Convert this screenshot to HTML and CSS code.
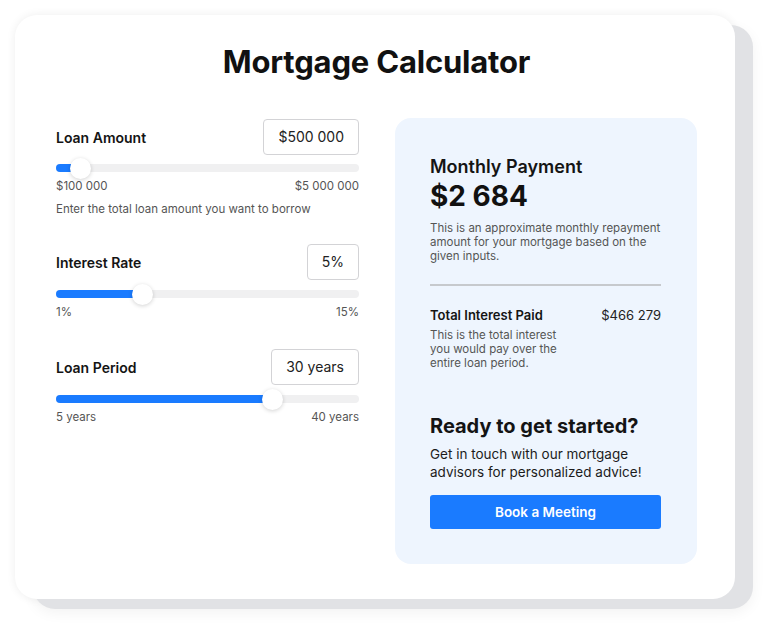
FILE: index.html
```html
<!DOCTYPE html>
<html lang="en">
<head>
<meta charset="utf-8">
<title>Mortgage Calculator</title>
<link rel="stylesheet" href="styles.css">
</head>
<body>
<div class="card">
  <h1 class="title">Mortgage Calculator</h1>
  <div class="columns">
    <div class="inputs">
      <div class="field">
        <div class="field-head">
          <span class="label">Loan Amount</span>
          <span class="value-box">$500 000</span>
        </div>
        <div class="track">
          <div class="fill" style="width:8.2%"></div>
          <div class="thumb" style="left:8.2%"></div>
        </div>
        <div class="range"><span>$100 000</span><span>$5 000 000</span></div>
        <div class="hint">Enter the total loan amount you want to borrow</div>
      </div>
      <div class="field">
        <div class="field-head">
          <span class="label">Interest Rate</span>
          <span class="value-box">5%</span>
        </div>
        <div class="track">
          <div class="fill" style="width:28.6%"></div>
          <div class="thumb" style="left:28.6%"></div>
        </div>
        <div class="range"><span>1%</span><span>15%</span></div>
      </div>
      <div class="field">
        <div class="field-head">
          <span class="label">Loan Period</span>
          <span class="value-box">30 years</span>
        </div>
        <div class="track">
          <div class="fill" style="width:71.4%"></div>
          <div class="thumb" style="left:71.4%"></div>
        </div>
        <div class="range"><span>5 years</span><span>40 years</span></div>
      </div>
    </div>
    <div class="summary">
      <div class="sum-title">Monthly Payment</div>
      <div class="sum-amount">$2 684</div>
      <p class="sum-desc">This is an approximate monthly repayment amount for your mortgage based on the given inputs.</p>
      <div class="divider"></div>
      <div class="interest-row">
        <div class="interest-text">
          <div class="interest-label">Total Interest Paid</div>
          <p class="interest-desc">This is the total interest you would pay over the entire loan period.</p>
        </div>
        <div class="interest-value">$466 279</div>
      </div>
      <div class="cta-title">Ready to get started?</div>
      <p class="cta-text">Get in touch with our mortgage advisors for personalized advice!</p>
      <button class="cta-button">Book a Meeting</button>
    </div>
  </div>
</div>
</body>
</html>
```

FILE: styles.css
```css
* { box-sizing: border-box; }
html, body { margin: 0; padding: 0; background: #ffffff; }
body {
  font-family: Inter, "Liberation Sans", sans-serif;
  color: #141414;
  width: 768px;
  height: 625px;
  overflow: hidden;
}
.card {
  margin: 15px 0 0 15px;
  width: 720px;
  height: 584px;
  background: #ffffff;
  border-radius: 22px;
  box-shadow: 18px 10px 0 #e1e2e5, 0 0 10px rgba(0,0,0,0.07), 18px 14px 14px rgba(0,0,0,0.05);
  padding: 29px 38px 0 41px;
}
.title {
  margin: 0;
  text-align: center;
  font-size: 31px;
  line-height: 36px;
  font-weight: 700;
  letter-spacing: -0.2px;
  color: #111;
}
.columns {
  display: flex;
  gap: 36px;
  margin-top: 38px;
  align-items: flex-start;
}
.inputs {
  width: 303px;
  display: flex;
  flex-direction: column;
  gap: 27px;
  padding-top: 1px;
}
.field:nth-child(3) { margin-top: 2px; }
.field-head {
  display: flex;
  justify-content: space-between;
  align-items: center;
  height: 36px;
}
.label {
  font-size: 14px;
  font-weight: 600;
  color: #141414;
}
.value-box {
  height: 36px;
  line-height: 34px;
  padding: 0 14px;
  border: 1px solid #d3d3d6;
  border-radius: 4px;
  font-size: 14px;
  color: #222;
  background: #fff;
}
.track {
  position: relative;
  height: 8px;
  margin-top: 10px;
  background: #f0f0f1;
  border-radius: 4px;
}
.field:first-child .track { margin-top: 9px; }
.fill {
  height: 8px;
  background: #1a7bff;
  border-radius: 4px;
}
.thumb {
  position: absolute;
  top: 50%;
  width: 21px;
  height: 21px;
  margin: -10.5px 0 0 -10.5px;
  background: #fff;
  border-radius: 50%;
  box-shadow: 0 1px 4px rgba(0,0,0,0.18);
}
.range {
  display: flex;
  justify-content: space-between;
  margin-top: 6px;
  font-size: 11.5px;
  line-height: 16px;
  color: #555;
}
.hint {
  margin-top: 7px;
  font-size: 11.5px;
  line-height: 16px;
  color: #555;
}
.summary {
  width: 302px;
  height: 446px;
  background: #eef5fe;
  border-radius: 16px;
  padding: 38px 36px 35px 35px;
  display: flex;
  flex-direction: column;
}
.sum-title {
  font-size: 18px;
  line-height: 22px;
  font-weight: 600;
  color: #141414;
}
.sum-amount {
  margin-top: 1px;
  font-size: 28px;
  line-height: 34px;
  font-weight: 700;
  color: #111;
}
.sum-desc {
  margin: 8px 0 0;
  font-size: 11.5px;
  line-height: 14px;
  color: #555;
}
.divider {
  margin-top: 21px;
  height: 2px;
  background: #c6c9cd;
}
.interest-row {
  display: flex;
  justify-content: space-between;
  align-items: flex-start;
  margin-top: 21px;
}
.interest-text { width: 140px; }
.interest-label {
  font-size: 13px;
  line-height: 16px;
  font-weight: 600;
  color: #141414;
  white-space: nowrap;
}
.interest-desc {
  margin: 5px 0 0;
  font-size: 11.5px;
  line-height: 14px;
  color: #555;
}
.interest-value {
  font-size: 13px;
  line-height: 16px;
  color: #222;
}
.cta-title {
  margin-top: 44px;
  font-size: 20px;
  line-height: 24px;
  font-weight: 700;
  color: #141414;
}
.cta-text {
  margin: 7px 0 0;
  font-size: 13.5px;
  line-height: 18px;
  color: #1c1c1c;
}
.cta-button {
  margin-top: 14px;
  height: 35px;
  width: 100%;
  border: none;
  border-radius: 3px;
  background: #1a7bff;
  color: #fff;
  font-family: inherit;
  font-size: 13.5px;
  font-weight: 600;
}
```
